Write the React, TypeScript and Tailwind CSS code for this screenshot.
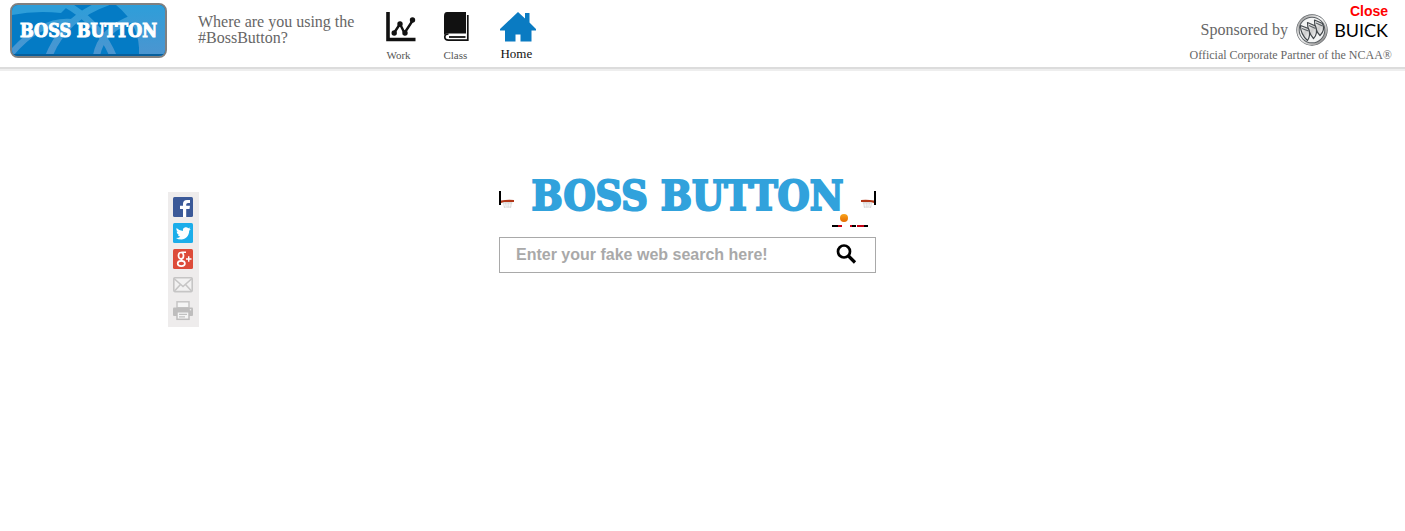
import { useState } from 'react'
import type { ReactNode } from 'react'

function WorkIcon() {
  return (
    <svg width="30" height="30" viewBox="0 0 30 30" fill="none" stroke="#111" aria-hidden="true">
      <path d="M2 0V27.500H29.500" strokeWidth="3.600" />
      <path d="M8 21L14 12L18.500 21L27 8" strokeWidth="2.400" />
      <g fill="#111" stroke="none">
        <circle cx="8.200" cy="21" r="2.700" />
        <circle cx="14" cy="12" r="2.700" />
        <circle cx="19" cy="21" r="2.700" />
        <circle cx="26.500" cy="8" r="2.700" />
      </g>
    </svg>
  )
}

function ClassIcon() {
  return (
    <svg width="27" height="30" viewBox="0 0 27 30" aria-hidden="true">
      <path d="M4 0H23V21.500H4.500Q1 21.500 1 24V4Q1 0 4 0Z" fill="#111" />
      <path
        d="M24.800 3V28.200H5.500Q1.800 28.200 1.800 25.100Q1.800 22 5.500 22"
        fill="none"
        stroke="#111"
        strokeWidth="1.700"
      />
      <path d="M6 25H22.500" stroke="#111" strokeWidth="1.800" />
    </svg>
  )
}

function HomeIcon() {
  return (
    <svg width="36" height="30" viewBox="0 0 36 30" aria-hidden="true">
      <path
        d="M18 0L25 6.500V1H29.500V10.500L36 17V18.500H31.500V29.500H20.500V22.500H15.500V29.500H5V18.500H0V17Z"
        fill="#0a7bc2"
      />
    </svg>
  )
}

function BuickEmblem() {
  return (
    <svg width="32" height="32" viewBox="0 0 32 32" aria-hidden="true">
      <defs>
        <linearGradient id="ring" x1="0" y1="0" x2="1" y2="1">
          <stop offset="0" stopColor="#888" />
          <stop offset="0.450" stopColor="#fff" />
          <stop offset="1" stopColor="#777" />
        </linearGradient>
        <linearGradient id="shield" x1="0" y1="0" x2="1" y2="1">
          <stop offset="0" stopColor="#fff" />
          <stop offset="0.500" stopColor="#ccc" />
          <stop offset="1" stopColor="#fff" />
        </linearGradient>
      </defs>
      <circle cx="16" cy="16" r="14" fill="#f3f4f4" stroke="#5b6064" strokeWidth="3.400" />
      <circle cx="16" cy="16" r="14.200" fill="none" stroke="url(#ring)" strokeWidth="1.800" />
      <g fill="url(#shield)" stroke="#42474b" strokeWidth="1.200" strokeLinejoin="round">
        <path d="M18.500 6L26.500 9.500C29 15 26.500 19 24 21.500C20.500 18 18.500 13 18.500 6Z" />
        <path d="M11.500 8.500L19.500 12C21.500 17.500 20.500 21.500 17.500 24.500C13.500 20 11.500 15 11.500 8.500Z" />
        <path d="M4.500 11.500L12.500 14.500C14.500 19.500 13.500 23.500 11.500 26.500C7 22.500 4.500 17.500 4.500 11.500Z" />
      </g>
      <path
        d="M6 14.500L12.500 17M13 11.500L19.500 14.500M20 9L26.500 12"
        fill="none"
        stroke="#5c6266"
        strokeWidth="1.100"
      />
    </svg>
  )
}

function LogoButton() {
  return (
    <button
      type="button"
      className="relative flex h-[55px] w-[157px] shrink-0 items-center justify-center overflow-hidden rounded-lg border-2 border-[#808080] bg-[#047bc5]">
      <svg
        className="absolute inset-0 h-full w-full"
        viewBox="0 0 153 51"
        preserveAspectRatio="none"
        aria-hidden="true">
        <defs>
          <linearGradient id="panel" gradientUnits="userSpaceOnUse" x1="0" y1="0" x2="0" y2="51">
            <stop offset="0" stopColor="#2e9ed9" />
            <stop offset="1" stopColor="#4c95d0" />
          </linearGradient>
        </defs>
        <rect width="153" height="51" fill="#047bc5" />
        <path d="M104 0H153V51H127Q129 20 104 0Z" fill="url(#panel)" />
        <g fill="none" stroke="url(#panel)" strokeWidth="7">
          <path d="M52 -2Q88 18 102 53" />
          <path d="M96 -3Q52 12 36 53" />
          <path d="M-2 50Q28 14 60 17" strokeWidth="6" />
          <path d="M84 53Q88 25 122 13" />
        </g>
        <path d="M0 0H57L49 8Q24 5 0 10Z" fill="#2e9ed9" />
        <path d="M0 50H153" stroke="#075f9c" strokeWidth="2" />
      </svg>
      <span className="relative whitespace-nowrap font-['DejaVu_Serif_Condensed','DejaVu_Serif',serif] text-[18px] leading-6 font-bold text-white [-webkit-text-stroke:1px_#fff]">
        BOSS BUTTON
      </span>
    </button>
  )
}

const PLACES = [
  { name: 'Work', icon: <WorkIcon />, style: 'text-[11px] text-[#555] leading-[18px]' },
  { name: 'Class', icon: <ClassIcon />, style: 'text-[11px] text-[#555] leading-[18px]' },
  { name: 'Home', icon: <HomeIcon />, style: 'text-[13px] text-[#111] leading-4' },
]

function Header() {
  return (
    <header className="relative flex h-[69px] items-start justify-between border-b-2 border-[#dcdcdc] pt-[3px] pr-[13px] pl-[10px] font-['Liberation_Serif',serif] text-[#666] shadow-[0_2px_0_#eee]">
      <div className="flex items-start">
        <LogoButton />
        <p className="ml-[31px] pt-[11px] text-[16px] leading-4">
          Where are you using the
          <br />
          #BossButton?
        </p>
        <nav className="ml-8 flex pt-[9px]">
          {PLACES.map((place) => (
            <a
              key={place.name}
              href={`#${place.name.toLowerCase()}`}
              className={`flex w-[57px] flex-col gap-1 ${place.style}`}>
              {place.icon}
              {place.name}
            </a>
          ))}
        </nav>
      </div>
      <div className="pt-[11px] text-right">
        <div className="flex items-center justify-end gap-2 pr-1">
          <span className="text-[16px] leading-5">Sponsored by</span>
          <span className="flex items-center gap-[6px]">
            <BuickEmblem />
            <span className="font-['Lato',sans-serif] text-[18px] leading-5 text-black">BUICK</span>
          </span>
        </div>
        <p className="text-[12px] leading-[18px]">Official Corporate Partner of the NCAA®</p>
      </div>
      <button
        type="button"
        className="absolute top-1 right-[17px] font-['Liberation_Sans',sans-serif] text-[14px] leading-[14px] font-bold text-[#f00]">
        Close
      </button>
    </header>
  )
}

function ShareButton({ label, children }: { label: string; children: ReactNode }) {
  return (
    <button type="button" aria-label={label}>
      <svg width="20" height="20" viewBox="0 0 20 20" aria-hidden="true">
        {children}
      </svg>
    </button>
  )
}

function ShareBar() {
  return (
    <aside className="mt-[123px] flex w-[31px] shrink-0 flex-col gap-[6px] self-start bg-[#eeecec] pt-[5px] pb-[6px] pl-[5px] [&>button]:size-5">
      <ShareButton label="Facebook">
        <rect width="20" height="20" rx="1.500" fill="#3b5998" />
        <path
          d="M10 20V12H7V8.800H10V6.800Q10 3 14 3H17V6H15Q13.200 6 13.200 7.500V8.800H17L16.500 12H13.200V20Z"
          fill="#fff"
        />
      </ShareButton>
      <ShareButton label="Twitter">
        <rect width="20" height="20" rx="1.500" fill="#1badea" />
        <path
          d="M3.500 5Q6.500 8 10 8C9.500 5 11.500 4.200 13 4.200Q14.400 4.200 15.300 5.200L17.300 4.500L16.200 6.300L17.800 6L16.200 7.800C16.200 13 12.500 16.500 8.500 16.500Q5 16.500 3 15Q5.800 15 7.300 13.800Q5.300 13.500 4.700 11.800H6Q3.600 10.800 3.600 8.500L4.800 9Q2.700 7 3.500 5Z"
          fill="#fff"
        />
      </ShareButton>
      <ShareButton label="Google Plus">
        <rect width="20" height="20" rx="1.500" fill="#dd4b39" />
        <g fill="none" stroke="#fff">
          <ellipse cx="8" cy="6.700" rx="2.500" ry="3.200" strokeWidth="1.700" />
          <path d="M13 3.300H8.500M9 9.500Q7.500 11 9.500 12" strokeWidth="1.400" />
          <ellipse cx="8.300" cy="14.500" rx="3.600" ry="2.600" strokeWidth="1.700" />
          <path d="M13 10H18.500M15.700 7.300V12.700" strokeWidth="1.400" />
        </g>
      </ShareButton>
      <ShareButton label="Email">
        <g fill="#f2f1f1" stroke="#c6c5c5" strokeWidth="1.600">
          <rect x="0.800" y="2.800" width="18.400" height="13.800" rx="1" />
          <path d="M1 3.500L10 11.500L19 3.500M1.500 16L7.500 9.500M18.500 16L12.500 9.500" fill="none" />
        </g>
      </ShareButton>
      <ShareButton label="Print">
        <rect x="4" y="0.800" width="12" height="6" fill="#f5f5f5" stroke="#c6c5c5" strokeWidth="1.500" />
        <rect x="0" y="6.500" width="20" height="8.500" rx="1" fill="#bebdbd" />
        <rect x="4" y="10.800" width="12" height="7.500" fill="#f5f5f5" stroke="#bebdbd" strokeWidth="1.500" />
        <path d="M6 13.300H14M6 15.800H12" stroke="#c1c1c1" strokeWidth="1.300" />
        <circle cx="17.500" cy="8.800" r="0.800" fill="#eee" />
      </ShareButton>
    </aside>
  )
}

function Hoop({ className }: { className?: string }) {
  return (
    <svg width="15" height="18" viewBox="0 0 15 18" className={className} aria-hidden="true">
      <rect width="2" height="14" fill="#000" />
      <path d="M3.500 11H13.500L12 17H5Z" fill="#dcdcdc" />
      <path d="M5 12L7 17M8 12V17M11 12L10 17M4 14H13" stroke="#fff" strokeWidth="0.600" />
      <path d="M2 9.500Q8 8.500 15 9V11H5L2 12Z" fill="#b23616" />
    </svg>
  )
}

function Game() {
  return (
    <svg width="36" height="14" viewBox="0 0 36 14" aria-hidden="true">
      <defs>
        <linearGradient id="ball" x1="0" y1="0" x2="0" y2="1">
          <stop offset="0" stopColor="#f9a51b" />
          <stop offset="1" stopColor="#e56a00" />
        </linearGradient>
      </defs>
      <circle cx="12" cy="5" r="4" fill="url(#ball)" />
      <path d="M0 12H6V14H0ZM20 12H24V14H20ZM32 12H36V14H32Z" fill="#000" />
      <path d="M6 12H10V14H6ZM18 12H20V14H18ZM25 12H32V14H25Z" fill="#c60012" />
    </svg>
  )
}

function Search() {
  const [query, setQuery] = useState('')

  return (
    <form
      onSubmit={(e) => e.preventDefault()}
      className="mt-[10px] flex h-9 items-center border border-[#a9a9a9] pr-[18px] pl-4">
      <input
        type="text"
        aria-label="Search"
        placeholder="Enter your fake web search here!"
        value={query}
        onChange={(e) => setQuery(e.target.value)}
        className="min-w-0 flex-1 font-['Liberation_Sans',sans-serif] text-[16px] leading-5 font-bold text-[#333] outline-none placeholder:text-[#a9a9a9]"
      />
      <button type="submit" aria-label="Submit search">
        <svg width="21" height="22" viewBox="0 0 21 22" fill="none" stroke="#000" aria-hidden="true">
          <circle cx="8" cy="7.500" r="6" strokeWidth="2.700" />
          <path d="M12.500 12L19 18.500" strokeWidth="3.200" />
        </svg>
      </button>
    </form>
  )
}

export default function App() {
  return (
    <div className="bg-white">
      <Header />
      <main className="mx-auto flex max-w-[1069px]">
        <ShareBar />
        <div className="flex flex-1 justify-center pt-[110px] pr-[61px]">
          <section className="flex w-[377px] flex-col">
            <div className="flex items-end justify-between">
              <Hoop className="mb-1" />
              <h1 className="whitespace-nowrap font-['DejaVu_Serif_Condensed','DejaVu_Serif',serif] text-[41px] leading-[34px] font-bold text-[#31a2dc] [-webkit-text-stroke:2px_#31a2dc]">
                BOSS BUTTON
              </h1>
              <Hoop className="mb-1 -scale-x-100" />
            </div>
            <div className="flex justify-end pr-2">
              <Game />
            </div>
            <Search />
          </section>
        </div>
      </main>
    </div>
  )
}
